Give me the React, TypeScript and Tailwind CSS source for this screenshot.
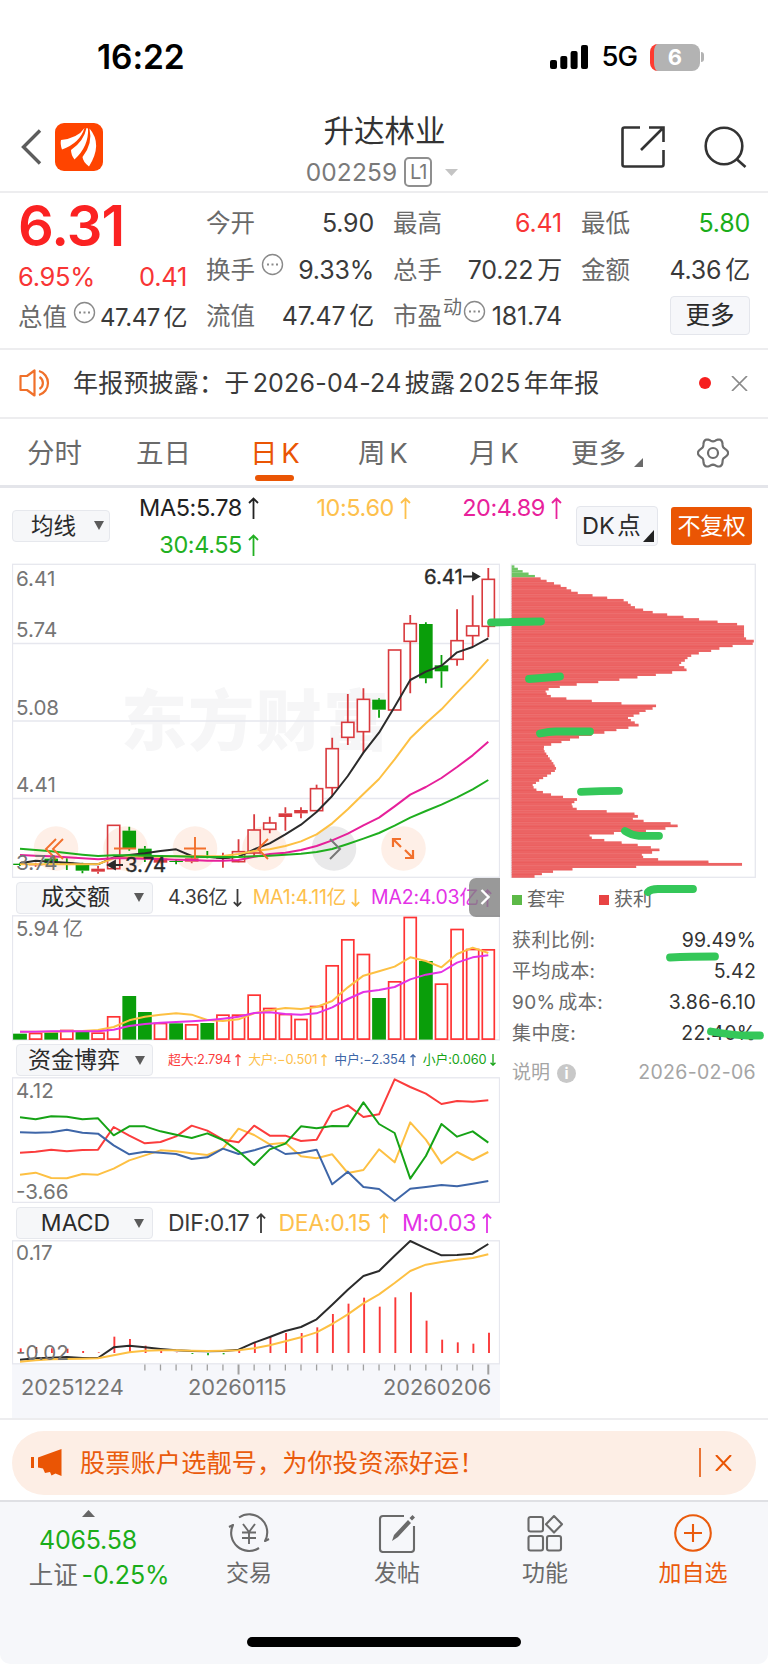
import type { ReactNode } from "react";
import clsx from "clsx";

const RED = "#f33";
const GREEN = "#0a9e0a";
const INK = "#2b2b2b";
const AMBER = "#fdc043";

// 31 trading days share the same x positions in every chart
const STEP = 15.61;
const dayX = (i: number) => 20 + i * STEP;

// [direction, high, bodyTop, bodyBottom, low] in thirds of a pixel below y=550
const candles: [string, number, number, number, number][] = [
  ["g", 938, 941, 945, 948], ["r", 938, 941, 946, 950], ["g", 922, 926, 940, 944], ["g", 925, 938, 941, 960],
  ["g", 938, 945, 962, 970], ["r", 948, 956, 965, 971], ["r", 826, 826, 956, 956], ["g", 830, 842, 897, 902],
  ["g", 888, 896, 922, 936], ["r", 924, 926, 938, 940], ["g", 930, 933, 936, 943], ["r", 918, 925, 935, 940],
  ["g", 903, 919, 922, 925], ["r", 908, 922, 926, 953], ["r", 868, 905, 935, 937], ["r", 793, 840, 909, 918],
  ["r", 800, 819, 838, 850], ["r", 772, 790, 801, 842], ["r", 772, 780, 790, 805], ["r", 704, 716, 782, 782],
  ["r", 563, 596, 713, 738], ["r", 432, 517, 562, 585], ["r", 415, 448, 545, 608], ["g", 445, 449, 479, 503],
  ["r", 300, 300, 480, 480], ["r", 195, 221, 274, 430], ["g", 217, 222, 385, 400], ["g", 315, 346, 364, 413],
  ["r", 178, 272, 328, 347], ["r", 136, 228, 257, 290], ["r", 54, 88, 229, 262],
];
const ma5 = [940, 932, 935, 938, 942, 943, 922, 915, 910, 903, 898, 918, 920, 925, 920, 898, 880, 853, 824, 786, 738, 678, 608, 548, 470, 390, 365, 347, 307, 291, 265];
const ma10 = [943, 943, 943, 943, 943, 942, 925, 922, 921, 920, 919, 919, 919, 918, 912, 903, 898, 888, 874, 853, 820, 778, 732, 687, 628, 565, 520, 478, 428, 380, 328];
const ma20 = [915, 917, 919, 922, 925, 928, 925, 925, 926, 927, 929, 930, 932, 932, 930, 920, 912, 908, 900, 888, 871, 851, 826, 803, 769, 734, 711, 684, 651, 616, 575];
const ma30 = [896, 900, 904, 909, 914, 918, 916, 916, 917, 918, 919, 920, 921, 921, 921, 919, 917, 914, 911, 906, 897, 882, 866, 849, 827, 803, 783, 764, 742, 718, 690];

const volumes = "g461 r459 g457 r450 g455 r458 r409 g348 g396 r429 g430 r433 g429 r404 r404 r344 r384 r402 r417 r378 r256 r178 r222 g354 r304 r111 g243 r311 r147 r207 r208".split(" ");
const volMa1 = [455, 455, 455, 454, 453, 450, 441, 421, 410, 404, 400, 404, 420, 423, 418, 400, 391, 384, 387, 381, 363, 322, 287, 274, 260, 232, 243, 262, 222, 203, 219];
const volMa2 = [455, 455, 454, 454, 454, 454, 449, 438, 432, 428, 426, 424, 421, 416, 410, 399, 397, 402, 404, 400, 382, 357, 336, 330, 321, 298, 284, 276, 248, 232, 226];

const fundHuge = [323, 320, 314, 319, 315, 314, 246, 272, 295, 291, 274, 242, 257, 284, 292, 242, 272, 272, 288, 284, 200, 181, 216, 208, 103, 126, 146, 177, 168, 170, 166];
const fundSmall = [217, 223, 214, 215, 223, 220, 271, 244, 244, 259, 269, 279, 265, 285, 319, 360, 313, 296, 244, 250, 243, 244, 172, 237, 264, 401, 333, 237, 275, 259, 293];
const fundMid = [262, 263, 262, 254, 263, 266, 301, 328, 320, 323, 327, 342, 337, 311, 327, 316, 301, 327, 323, 314, 418, 380, 426, 432, 468, 431, 426, 420, 424, 416, 408];
const fundLarge = [389, 383, 399, 400, 387, 389, 371, 346, 331, 316, 319, 325, 330, 311, 251, 270, 298, 293, 334, 340, 328, 384, 375, 313, 352, 232, 284, 355, 321, 345, 321];

const dif = [464, 460, 458, 456, 459, 459, 427, 422, 427, 432, 436, 438, 439, 438, 434, 413, 396, 378, 366, 343, 299, 254, 213, 198, 152, 108, 130, 151, 150, 146, 117];
const dea = [470, 466, 463, 462, 461, 460, 451, 442, 437, 436, 436, 437, 438, 437, 436, 430, 421, 409, 397, 382, 357, 328, 295, 268, 234, 198, 179, 171, 164, 159, 148];
const hist = [430, 426, 430, 431, 438, 442, 395, 402, 422, 437, 443, 447, 451, 448, 436, 413, 396, 384, 384, 367, 327, 296, 278, 305, 277, 262, 347, 404, 412, 416, 383];

// cost distribution outline: [y, x] pairs, widths in between are interpolated per row
const chips: [number, number][] = [
  [46, 38], [60, 58], [75, 95], [81, 112], [90, 131], [100, 162], [112, 195], [124, 218], [131, 240], [137, 285], [143, 320],
  [150, 370], [157, 383], [170, 398], [178, 425], [185, 450], [192, 490], [199, 540], [206, 580], [213, 640], [220, 680], [224, 732],
  [264, 732], [270, 755], [274, 764], [281, 757], [288, 690], [295, 655], [302, 632], [310, 590], [318, 568], [330, 555], [343, 535],
  [350, 545], [357, 572], [364, 532], [372, 480], [379, 425], [386, 375], [393, 315], [400, 250], [406, 200], [415, 148], [427, 133],
  [440, 155], [447, 210], [455, 300], [462, 390], [468, 480], [476, 452], [484, 430], [492, 410], [504, 382], [515, 400], [525, 416],
  [532, 385], [540, 345], [547, 310], [560, 240], [568, 210], [575, 185], [582, 155], [588, 132], [600, 131], [620, 145], [640, 160],
  [658, 170], [672, 148], [690, 118], [707, 95], [720, 110], [732, 145], [742, 195], [748, 231], [756, 222], [762, 215], [776, 220],
  [784, 320], [791, 403], [798, 415], [804, 393], [812, 420], [818, 500], [825, 541], [832, 515], [839, 460], [846, 400], [852, 275],
  [860, 262], [868, 295], [875, 347], [882, 395], [889, 440], [895, 465], [902, 487], [908, 445], [916, 417], [923, 435], [930, 490],
  [937, 672], [944, 742], [951, 325], [958, 195], [965, 153], [972, 122], [990, 70],
];

function chipEnd(v: number) {
  const k = Math.max(1, chips.findIndex((p) => p[0] >= v));
  const [y0, x0] = chips[k - 1];
  const [y1, x1] = chips[k];
  return x0 + ((x1 - x0) * (v - y0)) / (y1 - y0);
}

// six soft teeth around the centre
const gearPoints = Array.from({ length: 72 }, (_, i) => {
  const a = (i * Math.PI) / 36;
  const r = 13.4 + 1.7 * Math.cos(6 * a);
  return `${(16 + r * Math.cos(a)).toFixed(2)},${(16 + r * Math.sin(a)).toFixed(2)}`;
}).join(" ");

function Line({ data, top, color, w = 2 }: { data: number[]; top: number; color: string; w?: number }) {
  return <polyline fill="none" stroke={color} strokeWidth={w} strokeLinejoin="round" points={data.map((v, i) => `${dayX(i)},${top + v / 3}`).join(" ")} />;
}

function Frame({ y, h, x = 12.5, w = 487 }: { y: number; h: number; x?: number; w?: number }) {
  return <rect x={x} y={y} width={w} height={h} fill="none" stroke="#e6e7ee" strokeWidth="1.3" />;
}

function Axis({ x = 16, y, children, size = 20.6, fill = "#757575" }: { x?: number; y: number; children: string; size?: number; fill?: string }) {
  return <text x={x} y={y} fontSize={size} fill={fill}>{children}</text>;
}

function More() {
  return (
    <svg width="23" height="23" viewBox="0 0 23 23" fill="none" stroke="#8a8a8a" strokeWidth="1.4">
      <circle cx="11.5" cy="11.5" r="10" />
      <path d="M6 11.5h2M10.5 11.5h2M15 11.5h2" strokeWidth="2" />
    </svg>
  );
}

function Arrow({ down = false, h = 22, w = 1.8 }: { down?: boolean; h?: number; w?: number }) {
  return (
    <svg width={h / 2} height={h} viewBox="0 0 11 22" fill="none" stroke="currentColor" strokeWidth={(w * 22) / h} className={clsx("shrink-0", down && "rotate-180")}>
      <path d="M5.5 22V1.5M1 6l4.5-4.5L10 6" />
    </svg>
  );
}

function Picker({ children, className }: { children: ReactNode; className?: string }) {
  return (
    <div className={clsx("flex shrink-0 items-center justify-between rounded-[4px] border-[1.5px] border-[#e6e8ed] bg-[#f6f7f9] tracking-normal text-[#2b2b2b]", className)}>
      <span className="flex-1 text-center whitespace-nowrap">{children}</span>
      <svg width="10" height="9" viewBox="0 0 10 9" fill="#5b5b5b"><path d="M0 0h10L5 9z" /></svg>
    </div>
  );
}

function Cell({ label, value, mark, className }: { label: ReactNode; value: string; mark?: ReactNode; className?: string }) {
  return (
    <div className="flex h-[46.5px] items-center justify-between whitespace-nowrap">
      <span className="flex text-[#6a6a6a]">{label}{mark}</span>
      <span className={clsx("text-[25px] tracking-[-0.2px]", className ?? "text-[#3a3a3a]")}>{value}</span>
    </div>
  );
}

function StatusBar() {
  return (
    <div className="flex h-[88px] items-start justify-between pt-[38px] pr-[64px] pl-[97px]">
      <span className="text-[33.5px] leading-[38px] font-semibold tracking-[-0.1px] text-black">16:22</span>
      <div className="flex h-[38px] items-center">
        <svg width="38" height="26" viewBox="0 0 38 26" className="mr-[13px]">
          <rect x="0" y="16" width="7" height="9" rx="2" /><rect x="10.3" y="12" width="7" height="13" rx="2" />
          <rect x="20.6" y="7" width="7" height="18" rx="2" /><rect x="31" y="1" width="7" height="24" rx="2" />
        </svg>
        <span className="mr-[13px] text-[27.5px] leading-none font-medium tracking-[-1px]">5G</span>
        <div className="flex h-[27px] w-[50px] items-center justify-center rounded-[8px] border-l-[4px] border-[#ff3b30] bg-[#b3b3b3] pr-1 text-[22px] leading-none font-bold text-white">6</div>
        <div className="ml-[1px] h-2.5 w-[3px] rounded-r-full bg-[#b3b3b3]" />
      </div>
    </div>
  );
}

function Header() {
  return (
    <header className="flex h-[104.5px] items-center justify-between border-b-2 border-[#ededef] pt-[15px] pr-[20px] pl-[21px]">
      <div className="flex w-[138px] items-center">
        <svg width="21" height="36" viewBox="0 0 21 36" fill="none" stroke="#5d5d5d" strokeWidth="3.4"><path d="M19 1.5L2.5 18l16.5 16.5" /></svg>
        <svg width="48" height="48" viewBox="0 0 48 48" className="ml-[13px]">
          <rect width="48" height="48" rx="9" fill="#ff4400" />
          <path d="M6 17Q23 15 29.5 5Q25 20 7 26.5Q5 21 6 17z" fill="#fff" />
          <path d="M16 27Q29 18 31.5 5L33 5.5Q34 23 19.5 36.5Q16 32 16 27z" fill="#fff" />
          <path d="M34.5 5.5Q48 21 34 43.5Q28 39 27.5 34Q38 21 34.5 5.5z" fill="#fff" />
        </svg>
      </div>
      <div className="flex flex-col items-center pt-[5px]">
        <div className="text-[30.5px] leading-[40px] text-[#333]">升达林业</div>
        <div className="mt-[6px] flex h-[30px] items-center text-[#7a7a7a]">
          <span className="text-[24.5px] tracking-[0.1px]">002259</span>
          <span className="ml-[7px] flex h-[30px] w-[28px] items-center justify-center rounded-[5px] border-2 border-[#8f8f8f] text-[20px] tracking-[-1px]">L1</span>
          <svg width="13" height="7" viewBox="0 0 13 7" fill="#c4c4c4" className="mr-[5px] ml-[13px]"><path d="M0 0h13L6.5 7z" /></svg>
        </div>
      </div>
      <div className="flex w-[138px] items-center justify-end gap-[39px]">
        <svg width="44" height="42" viewBox="0 0 44 42" fill="none" stroke="#333" strokeWidth="2.6">
          <path d="M19 1.5H3.5Q1.5 1.5 1.5 3.5V38.5Q1.5 40.5 3.5 40.5H40.5Q42.5 40.5 42.5 38.5V24M20 24L41 3M28 1.5H42.5V16" />
        </svg>
        <svg width="44" height="42" viewBox="0 0 44 42" fill="none" stroke="#333" strokeWidth="2.6">
          <circle cx="20" cy="20" r="18.3" /><path d="M32.5 33L41.5 41" />
        </svg>
      </div>
    </header>
  );
}

function Quote() {
  return (
    <section className="flex h-[157px] border-b-2 border-[#ededef] pr-[18px] pl-[18px] text-[24.5px] [word-spacing:-3px]">
      <div className="w-[169px]">
        <div className="pt-[2px] text-[56px] leading-[62px] font-semibold tracking-[-0.9px] text-[#fb2222]">6.31</div>
        <div className="mt-[5px] flex justify-between text-[25.5px] leading-[30px] tracking-[-0.3px] text-[#f83535]"><span>6.95%</span><span>0.41</span></div>
        <div className="mt-[3px] flex h-[46px] items-center justify-between whitespace-nowrap">
          <span className="flex text-[#6a6a6a]">总值<span className="mt-[2px] ml-[6px]"><More /></span></span>
          <span className="text-[24px] tracking-[-0.4px] text-[#3a3a3a]">47.47 亿</span>
        </div>
      </div>
      <div className="ml-[19px] w-[168px] pt-[8px]">
        <Cell label="今开" value="5.90" />
        <Cell label="换手" value="9.33%" mark={<span className="mt-[1px] ml-[6px]"><More /></span>} />
        <Cell label="流值" value="47.47 亿" />
      </div>
      <div className="ml-[19px] w-[169px] pt-[8px]">
        <Cell label="最高" value="6.41" className="text-[#f83535]" />
        <Cell label="总手" value="70.22 万" />
        <Cell label="市盈" value="181.74" mark={<><span className="-mt-[4px] ml-[1px] text-[19px]">动</span><span className="mt-[2px] ml-[1px]"><More /></span></>} />
      </div>
      <div className="ml-[19px] w-[169px] pt-[8px]">
        <Cell label="最低" value="5.80" className="text-[#1aad19]" />
        <Cell label="金额" value="4.36 亿" />
        <div className="mt-[2px] ml-auto flex h-[39px] w-[80px] items-center justify-center rounded-[4px] border-[1.5px] border-[#e4e6ec] bg-[#f6f7fa] text-[#2b2b2b]">更多</div>
      </div>
    </section>
  );
}

function Notice() {
  return (
    <section className="flex h-[69px] items-center border-b-2 border-[#ededef] pr-[20px] pl-[19px]">
      <svg width="34" height="28" viewBox="0 0 34 28" fill="none" stroke="#f0702a" strokeWidth="2.2" strokeLinejoin="round">
        <path d="M15.5 1.5v25L8 21H1.5V7H8zM20.5 8a7 7 0 0 1 0 12M20 2a12.5 12.5 0 0 1 0 24" />
      </svg>
      <span className="mt-[1px] ml-[20px] flex-1 text-[25px] tracking-[0.2px] whitespace-nowrap text-[#3a3a3a] [word-spacing:-4px]">年报预披露：于 2026-04-24 披露 2025 年年报</span>
      <span className="mr-[20px] h-3 w-3 rounded-full bg-[#f61e1e]" />
      <svg width="17" height="15" viewBox="0 0 17 15" stroke="#8a8a8a" strokeWidth="1.7"><path d="M1 0l15 15M16 0L1 15" /></svg>
    </section>
  );
}

function Tabs() {
  return (
    <nav className="flex h-[69px] items-center border-b-[3px] border-[#e4e5ea] pt-[4px] pl-[27px] text-[27.5px] whitespace-nowrap text-[#6a6a6a] [word-spacing:-4px]">
      <span className="w-[109px]">分时</span>
      <span className="w-[114px]">五日</span>
      <span className="relative w-[108px] text-[#ea5504]">日 K<i className="absolute top-[42px] left-[5px] h-[6px] w-[39px] rounded-[3px] bg-[#ea5504]" /></span>
      <span className="w-[111px]">周 K</span>
      <span className="w-[102px]">月 K</span>
      <span className="flex w-[126px] items-center">更多<svg width="9" height="9" viewBox="0 0 9 9" fill="#6a6a6a" className="mt-[18px] ml-[8px]"><path d="M9 0v9H0z" /></svg></span>
      <svg width="32" height="32" viewBox="0 0 32 32" fill="none" stroke="#6e6e6e" strokeWidth="2.2" strokeLinejoin="round" className="-mt-[2px]">
        <polygon points={gearPoints} />
        <circle cx="16" cy="16" r="5" />
      </svg>
    </nav>
  );
}

function AverageBar() {
  return (
    <div className="flex h-[75px] items-start pl-[12px] text-[23.5px] leading-[26px] tracking-[-0.4px] whitespace-nowrap [word-spacing:-4px]">
      <Picker className="mt-[22px] h-[32px] w-[98px] pr-[5px] text-[22.5px]">均线</Picker>
      <div className="mt-[7px] ml-[28px] grid w-[424px] grid-cols-[121px_152px_151px] gap-y-[11px]">
        <span className="flex items-center justify-end gap-[6px] text-[#222]">MA5:5.78<Arrow /></span>
        <span className="flex items-center justify-end gap-[6px] text-[#fdc04c]">10:5.60<Arrow /></span>
        <span className="flex items-center justify-end gap-[6px] text-[#e8219b]">20:4.89<Arrow /></span>
        <span className="flex items-center justify-end gap-[6px] text-[#22b022]">30:4.55<Arrow /></span>
      </div>
      <div className="mt-[18px] ml-[14px] flex h-[40px] w-[82px] items-center rounded-[4px] border-[1.5px] border-[#e4e6ec] bg-[#f6f7fa] pl-[5px] tracking-normal text-[#2b2b2b]">
        DK 点
        <svg width="11" height="12" viewBox="0 0 11 12" fill="#222" className="mt-[20px] ml-[2px] shrink-0"><path d="M11 0v12H0z" /></svg>
      </div>
      <div className="mt-[19px] ml-[13px] flex h-[38px] w-[81px] items-center justify-center rounded-[3px] bg-[#ea5504] text-[23px] text-white">不复权</div>
    </div>
  );
}

function KChart() {
  return (
    <svg width="488" height="315" viewBox="12 563 488 315">
      <text x="121" y="745" fontSize="66" fontWeight="900" fill="#f6f6f7" textLength="268">东方财富</text>
      <Frame y={564.3} h={313} />
      <path d="M12 643.5H500M12 721H500M12 798.5H500" stroke="#e6e7ee" strokeWidth="1.3" />
      {[0, 1, 2, 3, 4, 5].map((i) => <circle key={i} cx={56 + i * 69.5} cy="848.5" r="22.3" fill={i === 4 ? "#e9e9ea" : "#feefe7"} />)}
      {candles.map(([dir, hi, top, bottom, lo], i) => {
        const y = (v: number) => 550 + v / 3;
        const x = dayX(i);
        const solid = dir === "g" || bottom - top < 14;
        const color = dir === "g" ? GREEN : "#d93a3e";
        return (
          <g key={i} stroke={color}>
            <path d={`M${x} ${y(hi)}V${y(top)}M${x} ${y(bottom)}V${y(lo)}`} strokeWidth="1.8" />
            {solid
              ? <rect x={x - 6.8} y={y(top)} width="13.6" height={(bottom - top) / 3} fill={color} stroke="none" />
              : <rect x={x - 6.1} y={y(top)} width="12.2" height={(bottom - top) / 3} fill="#fff" fillOpacity={i === 6 || i === 15 ? 0 : 1} strokeWidth="1.6" />}
          </g>
        );
      })}
      <Line data={ma5} top={550} color="#2b2b2b" />
      <Line data={ma10} top={550} color={AMBER} />
      <Line data={ma20} top={550} color="#e6209a" />
      <Line data={ma30} top={550} color="#1fae1f" />
      <g fill="none" stroke="#f2702c" strokeWidth="1.9">
        <path d="M56 839l-10 10 10 10M63 839l-10 10 10 10M114 848.5h22M184 848.5h22M195 837v22M268 839l-10 10 10 10" />
        <path d="M393 847v-8h8M393 839l8 8M413 850v8h-8M413 858l-8-8" strokeWidth="2.2" />
      </g>
      <path d="M330 839l10 10-10 10" fill="none" stroke="#777" strokeWidth="2" />
      <Axis y={586}>6.41</Axis>
      <Axis y={636.5}>5.74</Axis>
      <Axis y={714.5}>5.08</Axis>
      <Axis y={792}>4.41</Axis>
      <Axis y={870}>3.74</Axis>
      <g stroke={INK} strokeWidth="1.8" fill={INK}>
        <path d="M109 865h14M115 861l-7 4 7 4zM463 576.5h12M473 573l6 3.5-6 3.5z" />
      </g>
      <g stroke={INK} strokeWidth=".4">
        <Axis x={125} y={872} size={20.3} fill={INK}>3.74</Axis>
        <Axis x={424} y={584} size={20.3} fill={INK}>6.41</Axis>
      </g>
    </svg>
  );
}

function VolumeChart() {
  return (
    <svg width="488" height="126" viewBox="12 915 488 126" className="[word-spacing:-2px]">
      <Frame y={915.8} h={124} />
      <Axis y={936} size={20.3}>5.94 亿</Axis>
      {volumes.map((item, i) => {
        const y = 880 + Number(item.slice(1)) / 3;
        return item[0] === "g"
          ? <rect key={i} x={dayX(i) - 6.9} y={y} width="13.8" height={1039.6 - y} fill={GREEN} />
          : <rect key={i} x={dayX(i) - 6} y={y + 0.5} width="12" height={1038.6 - y} fill="#fff" stroke={RED} strokeWidth="1.7" />;
      })}
      <Line data={volMa1} top={880} color={AMBER} />
      <Line data={volMa2} top={880} color="#e332e6" />
    </svg>
  );
}

function FundChart() {
  return (
    <svg width="488" height="126" viewBox="12 1077 488 126">
      <Frame y={1077.8} h={124.6} />
      <Line data={fundLarge} top={1045} color={AMBER} />
      <Line data={fundHuge} top={1045} color="#fb3c3c" />
      <Line data={fundMid} top={1045} color="#3e66a8" />
      <Line data={fundSmall} top={1045} color="#16a316" />
      <Axis y={1098}>4.12</Axis>
      <Axis y={1198.5}>-3.66</Axis>
    </svg>
  );
}

function MacdChart() {
  return (
    <svg width="488" height="178" viewBox="12 1240 488 178">
      <rect x="12" y="1364" width="488" height="54" fill="#f6f7fb" />
      <Frame y={1240.8} h={123} />
      {hist.map((v, i) => <path key={i} d={`M${dayX(i) + 0.7} ${1205 + v / 3}V1353`} stroke={v > 444 ? "#1fae1f" : "#fa3838"} strokeWidth="1.9" />)}
      <Line data={dif} top={1205} color={INK} />
      <Line data={dea} top={1205} color={AMBER} />
      {hist.map((_, i) => i >= 8 && <path key={i} d={`M${dayX(i)} 1364.5v${i % 16 === 14 ? 10 : 6}`} stroke="#a0a0a0" strokeWidth={i % 16 === 14 ? 2 : 1.3} />)}
      <Axis y={1260}>0.17</Axis>
      <Axis y={1359.5}>-0.02</Axis>
      <Axis x={21} y={1395} size={21.8}>20251224</Axis>
      <Axis x={188} y={1395} size={21.8}>20260115</Axis>
      <Axis x={383} y={1395} size={21.8}>20260206</Axis>
    </svg>
  );
}

function ChipChart() {
  const rows = Array.from({ length: 130 }, (_, i) => 46 + i * 7.2);
  return (
    <svg width="246" height="315" viewBox="510 563 246 315" className="-ml-[2px]">
      <Frame x={511.3} y={564.3} w={244} h={313} />
      {rows.map((v) => (
        <g key={v}>
          <rect x="511.7" y={550 + v / 3} width={(chipEnd(v + 3.6) - 35) / 3} height="2.5" fill={v < 78 ? "#6ec464" : "#ec6464"} />
          {v >= 78 && <rect x="511.7" y={552 + v / 3} width={(chipEnd(v + 3.6) - 35) / 3} height=".6" fill="#e75757" />}
        </g>
      ))}
    </svg>
  );
}

function Stat({ label, value }: { label: string; value: string }) {
  return (
    <div className="flex h-[31px] items-center justify-between whitespace-nowrap [word-spacing:-3px]">
      <span className="text-[19px] tracking-[0.4px] text-[#6a6a6a]">{label}</span>
      <span className="text-[19.5px] tracking-[0.2px] text-[#333]">{value}</span>
    </div>
  );
}

function ChipPanel() {
  return (
    <aside className="ml-[12px] w-[244px]">
      <ChipChart />
      <div className="flex h-[44px] items-center pt-[1px] text-[19px] text-[#666]">
        <i className="mr-[5px] h-[10px] w-[10px] bg-[#5cb947]" /><span className="w-[72px]">套牢</span>
        <i className="mr-[5px] h-[10px] w-[10px] bg-[#e84343]" /><span>获利</span>
      </div>
      <div className="pt-[4px]">
        <Stat label="获利比例:" value="99.49%" />
        <Stat label="平均成本:" value="5.42" />
        <Stat label="90% 成本:" value="3.86-6.10" />
        <Stat label="集中度:" value="22.40%" />
      </div>
      <div className="mt-[8px] flex h-[31px] items-center text-[19px] text-[#a5a5a5]">
        说明
        <span className="ml-[7px] flex h-[19px] w-[19px] items-center justify-center rounded-full bg-[#c8c8c8] text-[15px] leading-none font-bold text-white">i</span>
        <span className="ml-auto text-[19.5px] tracking-[0.3px]">2026-02-06</span>
      </div>
    </aside>
  );
}

function Charts() {
  return (
    <div className="flex h-[855px] pl-[12px]">
      <div className="w-[488px]">
        <KChart />
        <div className="relative flex h-[37px] items-center pt-[3px] pl-[4px] text-[19.5px] tracking-[-0.2px] whitespace-nowrap">
          <Picker className="h-[32px] w-[137px] pr-[8px] text-[23px]">成交额</Picker>
          <span className="ml-[15px] flex items-center gap-[5px] text-[#3a3a3a]">4.36亿<Arrow down h={18} /></span>
          <span className="ml-[11px] flex items-center gap-[5px] text-[#fdc04c]">MA1:4.11亿<Arrow down h={18} /></span>
          <span className="ml-[11px] flex items-center gap-[4px] text-[#e332e6]">MA2:4.03亿<Arrow h={18} /></span>
          <div className="absolute top-0 right-0 flex h-[39px] w-[31px] items-center justify-center rounded-l-[7px] bg-[#808080]/80">
            <svg width="10" height="16" viewBox="0 0 10 16" fill="none" stroke="#fff" strokeWidth="2.4"><path d="M1.5 1l7 7-7 7" /></svg>
          </div>
        </div>
        <VolumeChart />
        <div className="flex h-[36px] items-center pt-[3px] pl-[4px] text-[12.8px] tracking-[-0.1px] whitespace-nowrap">
          <Picker className="h-[32px] w-[137px] pr-[7px] text-[23px] [&>span]:-ml-[4px]">资金博弈</Picker>
          <span className="ml-[15px] flex items-center gap-[4px] text-[#fb3c3c]">超大:2.794<Arrow h={12} w={1.3} /></span>
          <span className="ml-[7px] flex items-center gap-[4px] text-[#fdc04c]">大户:−0.501<Arrow h={12} w={1.3} /></span>
          <span className="ml-[7px] flex items-center gap-[4px] text-[#3e66a8]">中户:−2.354<Arrow h={12} w={1.3} /></span>
          <span className="ml-[7px] flex items-center gap-[4px] text-[#16a316]">小户:0.060<Arrow down h={12} w={1.3} /></span>
        </div>
        <FundChart />
        <div className="flex h-[37px] items-center pt-[4px] pl-[4px] text-[23px] tracking-[-0.3px] whitespace-nowrap">
          <Picker className="h-[32px] w-[137px] pr-[8px]">MACD</Picker>
          <span className="ml-[15px] flex items-center gap-[6px] text-[#3a3a3a]">DIF:0.17<Arrow h={20} /></span>
          <span className="ml-[13px] flex items-center gap-[8px] text-[#fdc04c]">DEA:0.15<Arrow h={20} /></span>
          <span className="ml-[13px] flex items-center gap-[6px] text-[#e332e6]">M:0.03<Arrow h={20} /></span>
        </div>
        <MacdChart />
      </div>
      <ChipPanel />
    </div>
  );
}

function Banner() {
  return (
    <div className="h-[84px] border-t-2 border-b-2 border-t-[#ededef] border-b-[#dfe0e4] pt-[11px] pr-[12px] pl-[12px]">
      <div className="flex h-[64px] items-center rounded-[32px] bg-[#fdeee5] pr-[24px] pl-[19px] text-[#ea5b0c]">
        <svg width="31" height="27" viewBox="0 0 31 27" fill="#ea5504">
          <rect x="0" y="8" width="3" height="11" /><path d="M7 8.5L30.5 0v27l-6-2.5-4 2-1.5-3.5-5 1-2-4.5L7 18.5z" />
        </svg>
        <span className="mt-[2px] ml-[18px] flex-1 text-[25.2px] tracking-[0.1px] whitespace-nowrap">股票账户选靓号，为你投资添好运！</span>
        <i className="h-[29px] w-[2px] bg-[#ea7435]" />
        <svg width="17" height="16" viewBox="0 0 17 16" stroke="#ea5504" strokeWidth="2" className="ml-[14px]"><path d="M1 0l15 16M16 0L1 16" /></svg>
      </div>
    </div>
  );
}

function NavItem({ label, children, className }: { label: string; children: ReactNode; className: string }) {
  return (
    <div className={clsx("flex flex-col items-center text-[23px]", className)}>
      <svg width="44" height="40" viewBox="0 0 44 40" fill="none" stroke="currentColor" strokeWidth="2.1" strokeLinejoin="round">{children}</svg>
      <span className="mt-[2px] leading-[36px]">{label}</span>
    </div>
  );
}

function BottomBar() {
  return (
    <footer className="h-[162px] rounded-b-[10px] bg-[#f6f7fa]">
      <div className="flex h-[134px] pt-[11px]">
        <div className="flex w-[176px] flex-col items-center text-[25px] leading-[30px] tracking-[-0.2px] text-[#1aad19]">
          <svg width="13" height="7" viewBox="0 0 13 7" fill="#666" className="-mt-[3px]"><path d="M0 7h13L6.5 0z" /></svg>
          <span className="mt-[8px]">4065.58</span>
          <span className="mt-[5px] ml-[22px] whitespace-nowrap [word-spacing:-3px]"><span className="text-[24.5px] tracking-normal text-[#6a6a6a]">上证</span> -0.25%</span>
        </div>
        <NavItem label="交易" className="w-[146px] text-[#6a6a6a]">
          <path d="M12 4.5A18 18 0 0 1 38 28l4-2M32 35A18 18 0 0 1 6 12l-4 2" />
          <path d="M16 11l6 8 6-8M15 19.5h14M15 25h14M22 19v12" strokeWidth="1.9" />
        </NavItem>
        <NavItem label="发帖" className="w-[150px] text-[#6a6a6a]">
          <path d="M29 3H8Q5 3 5 6v30q0 3 3 3h28q3 0 3-3V13" />
          <path d="M17 28l2-6L33 7l3 3-13 14zM34.5 5l3-3 2.5 2.5-3 3z" fill="currentColor" stroke="none" />
        </NavItem>
        <NavItem label="功能" className="w-[146px] text-[#6a6a6a]">
          <rect x="5.5" y="4" width="14.5" height="14.5" rx="2" /><path d="M31 3l8 8.3-8 8.3-8-8.3z" />
          <rect x="5.5" y="23" width="14.5" height="14.5" rx="2" /><rect x="24" y="23" width="14" height="14.5" rx="2" />
        </NavItem>
        <NavItem label="加自选" className="w-[150px] text-[#ea5b0c]">
          <circle cx="22" cy="20" r="17.8" /><path d="M13 20h18M22 11v18" />
        </NavItem>
      </div>
      <div className="mx-auto mt-[1px] h-[10px] w-[274px] rounded-full bg-black" />
    </footer>
  );
}

// freehand marker strokes over the chips chart
function Marker() {
  return (
    <svg width="768" height="1664" viewBox="0 0 768 1664" fill="none" stroke="#34c759" strokeWidth="7.8" strokeLinecap="round" strokeLinejoin="round" className="pointer-events-none absolute top-0 left-0">
      <path d="M491 622.5L512 622l29-.5M529 679l31-2.5M540 733.5q9-2 16-2h34M581 791.8q20-1 38-1M625 831q6 4 14 4.8h20M648 892q3-3 10-3h35M670 957.5q20-1 45-1M711 1031.5q24 4 36 4h13" />
    </svg>
  );
}

export default function App() {
  return (
    <div className="relative h-[1664px] w-[768px] overflow-hidden bg-white font-['Inter','Noto_Sans_CJK_SC',sans-serif] leading-normal text-black">
      <StatusBar />
      <Header />
      <Quote />
      <Notice />
      <Tabs />
      <AverageBar />
      <Charts />
      <Banner />
      <BottomBar />
      <Marker />
    </div>
  );
}
